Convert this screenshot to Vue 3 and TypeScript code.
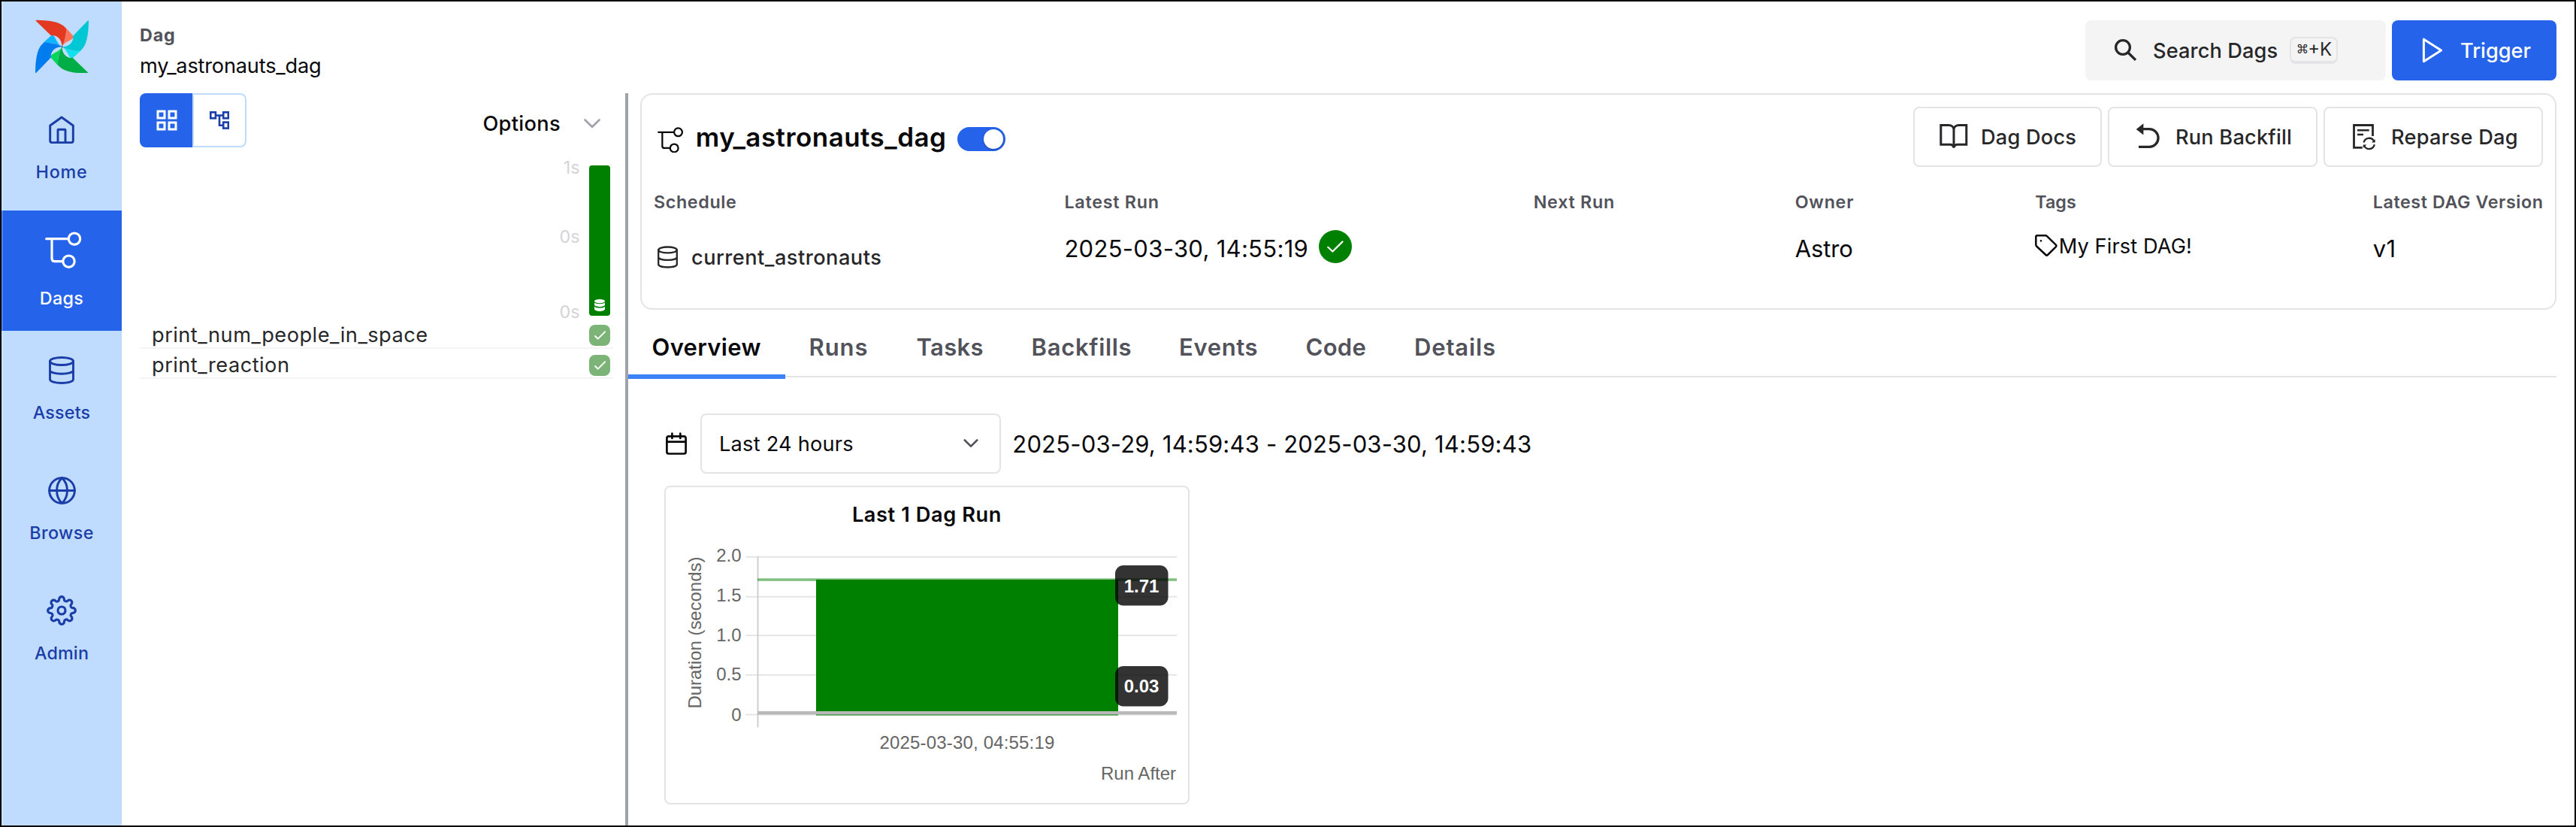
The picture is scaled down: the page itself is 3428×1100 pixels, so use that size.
<script setup lang="ts">
interface Tab { label: string; width: number; spacing: number }

const tabs: Tab[] = [
  { label: 'Overview', width: 209, spacing: 0.32 },
  { label: 'Runs', width: 143, spacing: 0.95 },
  { label: 'Tasks', width: 153, spacing: 0.33 },
  { label: 'Backfills', width: 196.5, spacing: 0.7 },
  { label: 'Events', width: 168.5, spacing: 0.65 },
  { label: 'Code', width: 144.5, spacing: 0.31 },
  { label: 'Details', width: 170, spacing: 0.85 },
]

const tasks = ['print_num_people_in_space', 'print_reaction']

const ticks = [
  { label: '2.0', line: 740.7, base: 747 },
  { label: '1.5', line: 793.7, base: 800 },
  { label: '1.0', line: 845.2, base: 852.7 },
  { label: '0.5', line: 897.8, base: 905.3 },
  { label: '0', line: 950.5, base: 958.7 },
]
</script>

<template>
  <div class="app">
    <nav class="nav">
      <div class="brand">
        <svg class="logo" viewBox="141 76 212 214">
          <g v-for="(c, i) in [['#e43921', '#ff7557'], ['#00c7d4', '#11e1ee'], ['#00ad46', '#04d659'], ['#017cee', '#0cb6ff']]" :key="i" :transform="`rotate(${i * 90} 247.5 184.5)`">
            <path :fill="c[1]" d="M262 108 L291 140 Q296 146 289 153 C275 162 256 168 247.5 184.5 C256 168 268 140 262 108Z" />
            <path :fill="c[0]" d="M143 81 Q141 78 147 78 C193 79 232 84 253 101 Q259 106 264 112 C265 136 258 165 247.5 184.5 C247 160 235 143 213 140 Q208 141 205 141Z" />
          </g>
          <circle cx="248" cy="185" r="3" fill="#51504f" />
        </svg>
      </div>
      <div class="nav-item">
        <span class="nav-icon">
          <svg width="34" height="37.3" viewBox="195 460 102 112" class="line" stroke-width="8.8">
            <path d="M246 466 L292 499 V559 Q292 567 284 567 H208 Q200 567 200 559 V499Z" />
            <path d="M231 567 V517 Q231 515 233 515 H259 Q261 515 261 517 V567" />
          </svg>
        </span>
        <span class="nav-label home">Home</span>
      </div>
      <div class="nav-item active">
        <span class="nav-icon">
          <svg width="48.7" height="49.3" viewBox="183 924 146 148" class="line" stroke-width="9.5">
            <path d="M188 953 H276 M210 953 V1031 Q210 1043 222 1043 H253" />
            <circle cx="300" cy="953" r="23" /><circle cx="277.500" cy="1043" r="23" />
          </svg>
        </span>
        <span class="nav-label dags">Dags</span>
      </div>
      <div class="nav-item">
        <span class="nav-icon">
          <svg width="34" height="37" viewBox="0 0 34 37" class="line" stroke-width="2.9">
            <ellipse cx="17" cy="6.5" rx="15.500" ry="5" />
            <path d="M1.500 6.500 V30.500 C1.500 33.500 8.400 35.500 17 35.500 S32.500 33.500 32.500 30.500 V6.500 M1.500 18.500 C1.500 21.300 8.400 23.300 17 23.300 S32.500 21.300 32.500 18.500" />
          </svg>
        </span>
        <span class="nav-label assets">Assets</span>
      </div>
      <div class="nav-item">
        <span class="nav-icon">
          <svg width="37" height="37" viewBox="0 0 37 37" class="line" stroke-width="2.9">
            <circle cx="18.500" cy="18.500" r="16.900" />
            <path d="M1.600 18.500 H35.400 M18.500 1.600 C27.800 10.500 27.800 26.500 18.500 35.400 C9.200 26.500 9.200 10.500 18.500 1.600Z" />
          </svg>
        </span>
        <span class="nav-label browse">Browse</span>
      </div>
      <div class="nav-item">
        <span class="nav-icon">
          <svg width="40" height="40" viewBox="0 0 24 24" class="line" stroke-width="1.9">
            <circle cx="12" cy="12" r="3" />
            <path d="M19.4 15a1.65 1.65 0 0 0 .33 1.82l.06.06a2 2 0 0 1 0 2.83 2 2 0 0 1-2.83 0l-.06-.06a1.65 1.65 0 0 0-1.82-.33 1.65 1.65 0 0 0-1 1.51V21a2 2 0 0 1-2 2 2 2 0 0 1-2-2v-.09A1.65 1.65 0 0 0 9 19.4a1.65 1.65 0 0 0-1.82.33l-.06.06a2 2 0 0 1-2.83 0 2 2 0 0 1 0-2.83l.06-.06a1.65 1.65 0 0 0 .33-1.82 1.65 1.65 0 0 0-1.51-1H3a2 2 0 0 1-2-2 2 2 0 0 1 2-2h.09A1.65 1.65 0 0 0 4.6 9a1.65 1.65 0 0 0-.33-1.82l-.06-.06a2 2 0 0 1 0-2.83 2 2 0 0 1 2.83 0l.06.06a1.65 1.65 0 0 0 1.82.33H9a1.65 1.65 0 0 0 1-1.51V3a2 2 0 0 1 2-2 2 2 0 0 1 2 2v.09a1.65 1.65 0 0 0 1 1.51 1.65 1.65 0 0 0 1.82-.33l.06-.06a2 2 0 0 1 2.83 0 2 2 0 0 1 0 2.83l-.06.06a1.65 1.65 0 0 0-.33 1.82V9a1.65 1.65 0 0 0 1.51 1H21a2 2 0 0 1 2 2 2 2 0 0 1-2 2h-.09a1.65 1.65 0 0 0-1.51 1z" />
          </svg>
        </span>
        <span class="nav-label admin">Admin</span>
      </div>
    </nav>

    <div class="main">
      <header class="header">
        <div class="crumbs">
          <div class="crumb-label">Dag</div>
          <div class="crumb-value">my_astronauts_dag</div>
        </div>
        <div class="header-actions">
          <button class="search">
            <svg class="btn-icon line" viewBox="0 0 40 40" stroke-width="3.300">
              <circle cx="16" cy="16" r="9.400" /><path class="handle" d="M22.500 22.500 L33 32.900" />
            </svg>
            <span>Search Dags</span>
            <kbd class="kbd"><span class="cmd">⌘</span>+K</kbd>
          </button>
          <button class="trigger">
            <svg class="btn-icon line" viewBox="0 0 40 40" stroke-width="3"><path d="M8.400 5.200 V34.800 L31.600 20Z" /></svg>
            <span>Trigger</span>
          </button>
        </div>
      </header>

      <div class="body">
        <aside class="grid-pane">
          <div class="toolbar">
            <div class="view-toggle">
              <button class="view on">
                <svg width="28" height="28" viewBox="0 0 28 28" fill="none" stroke="#fff" stroke-width="3">
                  <rect x="2" y="2" width="9" height="9" /><rect x="17" y="2" width="9" height="9" />
                  <rect x="2" y="17" width="9" height="9" /><rect x="17" y="17" width="9" height="9" />
                </svg>
              </button>
              <button class="view off">
                <svg width="26" height="24" viewBox="0 0 26 24" fill="none" stroke="#1a3da8" stroke-width="2.600">
                  <rect x="1.300" y="1.300" width="6.600" height="8" /><rect x="18.200" y="1.300" width="6.600" height="8" />
                  <rect x="18.200" y="14.600" width="6.600" height="8" /><path d="M8 5.500 H18 M13 5.500 V18.800 H18" />
                </svg>
              </button>
            </div>
            <div class="options">
              <span>Options</span>
              <svg width="22" height="13" viewBox="0 0 22 13" fill="none" stroke="#a1a1aa" stroke-width="2.700" stroke-linecap="round" stroke-linejoin="round"><path d="M1.500 1.500 L11 10.700 L20.500 1.500" /></svg>
            </div>
          </div>
          <div class="gantt">
            <div class="axis"><span class="one">1s</span><span>0s</span><span>0s</span></div>
            <div class="run-bar">
              <svg width="14" height="16" viewBox="0 0 14 16" fill="#fff">
                <ellipse cx="7" cy="2.600" rx="7" ry="2.600" />
                <path d="M0 4.400 C1.500 6.700 12.500 6.700 14 4.400 V7.300 C13.500 11 .5 11 0 7.300Z" />
                <path d="M0 9.700 C1.500 12.200 12.500 12.200 14 9.700 V13 C13.500 17 .5 17 0 13Z" />
              </svg>
            </div>
          </div>
          <div v-for="t in tasks" :key="t" class="task">
            <span>{{ t }}</span>
            <i class="state">
              <svg width="15" height="12" viewBox="0 0 15 12" fill="none" stroke="#fff" stroke-width="1.900" stroke-linecap="round" stroke-linejoin="round"><path d="M1 7 L4.800 10.700 L14 1.300" /></svg>
            </i>
          </div>
        </aside>
        <div class="divider"></div>

        <section class="detail">
          <div class="card">
            <div class="card-top">
              <svg class="dag-icon line" viewBox="183 924 146 148" stroke-width="9.600">
                <path d="M188 953 H276 M210 953 V1031 Q210 1043 222 1043 H253" />
                <circle cx="300" cy="953" r="23" /><circle cx="277.500" cy="1043" r="23" />
              </svg>
              <h1 class="title">my_astronauts_dag</h1>
              <div class="switch"><i></i></div>
              <div class="buttons">
                <button class="btn docs">
                  <svg class="btn-icon" viewBox="0 0 40 40" fill="none" stroke="currentColor" stroke-width="3">
                    <path d="M2.800 4.500 H13 C17 4.500 20 7 20 10.500 C20 7 23 4.500 27 4.500 H36.800 V30.200 H25 C22.500 30.200 20.500 32 20 34.500 C19.500 32 17.500 30.200 15 30.200 H2.800Z M20 9.500 V33" />
                  </svg>
                  <span>Dag Docs</span>
                </button>
                <button class="btn backfill">
                  <svg class="btn-icon" viewBox="0 0 40 40" fill="none" stroke="currentColor" stroke-width="3.300">
                    <path fill="currentColor" stroke="none" d="M3.700 9.900 L13.400 2.200 V17.500Z" />
                    <path d="M12 9.600 H21.200 A11.800 11.800 0 0 1 21.200 33.300 H7" />
                  </svg>
                  <span>Run Backfill</span>
                </button>
                <button class="btn reparse">
                  <svg class="btn-icon" viewBox="0 0 40 40" fill="none" stroke="currentColor" stroke-width="2.800">
                    <path d="M31.500 19 V4.500 H6.500 V34.300 H17.700" />
                    <path stroke-width="2.400" d="M11 11.300 H26.700 M11 17 H19" />
                    <path stroke-width="2.300" d="M19.600 27.500 A7.200 7.200 0 0 1 33 25.600 M33.800 30.300 A7.200 7.200 0 0 1 20.400 32.300" />
                    <path fill="currentColor" stroke="none" d="M34.700 23.200 V27.500 H30Z M18.700 34.700 V30.400 H23.400Z" />
                  </svg>
                  <span>Reparse Dag</span>
                </button>
              </div>
            </div>
            <div class="facts">
              <div>
                <div class="fact-label schedule">Schedule</div>
                <div class="asset">
                  <svg width="27" height="30" viewBox="0 0 34 37" class="line" stroke-width="2.900">
                    <ellipse cx="17" cy="6.500" rx="15.500" ry="5" />
                    <path d="M1.500 6.500 V30.500 C1.500 33.500 8.400 35.500 17 35.500 S32.500 33.500 32.500 30.500 V6.500 M1.500 18.500 C1.500 21.300 8.400 23.300 17 23.300 S32.500 21.300 32.500 18.500" />
                  </svg>
                  <span>current_astronauts</span>
                </div>
              </div>
              <div>
                <div class="fact-label">Latest Run</div>
                <div class="latest">
                  <span>2025-03-30, 14:55:19</span>
                  <i class="ok">
                    <svg width="22" height="16" viewBox="0 0 22 16" fill="none" stroke="#fff" stroke-width="2.200" stroke-linecap="round" stroke-linejoin="round"><path d="M1.300 8.800 L7.300 14.500 L20.500 1.500" /></svg>
                  </i>
                </div>
              </div>
              <div><div class="fact-label">Next Run</div></div>
              <div><div class="fact-label">Owner</div><div class="value owner">Astro</div></div>
              <div>
                <div class="fact-label tags">Tags</div>
                <div class="tag">
                  <svg width="30" height="30" viewBox="0 0 30 30" class="line" stroke-width="2.500">
                    <path d="M1.300 3 Q1.300 1.300 3 1.300 H14 Q15.200 1.300 16 2.100 L27.800 13.700 Q29 15 27.800 16.300 L17 27 Q15.700 28.300 14.400 27 L2.100 15.500 Q1.300 14.700 1.300 13.500Z" /><circle cx="8" cy="8.300" r=".6" stroke-width="1.500" />
                  </svg>
                  <span>My First DAG!</span>
                </div>
              </div>
              <div><div class="fact-label version">Latest DAG Version</div><div class="value v">v1</div></div>
            </div>
          </div>

          <div class="tabs">
            <a v-for="(t, i) in tabs" :key="t.label" class="tab" :class="{ current: i === 0 }" :style="{ width: t.width + 'px', letterSpacing: t.spacing + 'px' }">{{ t.label }}</a>
          </div>

          <div class="filter">
            <svg width="28" height="30" viewBox="0 0 28 30" class="line" stroke-width="2.700">
              <rect x="1.400" y="5.300" width="25.200" height="23.200" rx="2.500" /><path d="M1.400 12.700 H26.600 M8.400 1.700 V8 M19.300 1.700 V8" />
            </svg>
            <div class="select">
              <span>Last 24 hours</span>
              <svg width="20" height="12" viewBox="0 0 20 12" fill="none" stroke="#52525b" stroke-width="2.600" stroke-linecap="round" stroke-linejoin="round"><path d="M1.800 1.500 L10 9.700 L18.200 1.500" /></svg>
            </div>
            <span class="range">2025-03-29, 14:59:43 - 2025-03-30, 14:59:43</span>
          </div>

          <div class="chart-card">
            <h2>Last 1 Dag Run</h2>
            <svg class="chart" width="695" height="364" viewBox="886 704 695 364">
              <g stroke="#e5e5e5" stroke-width="2">
                <line v-for="t in ticks" :key="t.label" x1="992.500" x2="1566" :y1="t.line" :y2="t.line" />
              </g>
              <path d="M1008.500 740 V967.500" stroke="#cfcfcf" stroke-width="2" />
              <rect x="1086" y="771" width="402" height="180.500" fill="#008000" />
              <rect x="1008" y="769.300" width="558" height="3.500" fill="#008000" fill-opacity=".5" />
              <rect x="1008" y="946" width="558" height="4.500" fill="#b9b9b9" />
              <g class="tick" text-anchor="end">
                <text v-for="t in ticks" :key="t.label" x="986.500" :y="t.base">{{ t.label }}</text>
              </g>
              <text class="tick" transform="translate(932.800 942.500) rotate(-90)" letter-spacing="-.05">Duration (seconds)</text>
              <text class="tick" x="1170.500" y="995.700" letter-spacing=".17">2025-03-30, 04:55:19</text>
              <text class="tick" x="1465" y="1036.800">Run After</text>
              <g fill="#000" fill-opacity=".8">
                <rect x="1484" y="752" width="70.500" height="53.500" rx="11" /><rect x="1484" y="886" width="70.500" height="53.500" rx="11" />
              </g>
              <g class="tip" text-anchor="middle"><text x="1519" y="787.500">1.71</text><text x="1519" y="921">0.03</text></g>
            </svg>
          </div>
        </section>
      </div>
    </div>
  </div>
</template>

<style>
body { margin: 0; background: #fff; }
</style>

<style scoped>
.app, .app * { box-sizing: border-box; }
.app { display: flex; width: 3428px; height: 1100px; overflow: hidden; border: 2px solid #000; background: #fff; color: #09090b; font-family: Inter, "Liberation Sans", sans-serif; font-size: 27.2px; }
button { margin: 0; padding: 0; font: inherit; color: inherit; background: none; border: 0; display: flex; align-items: center; }
svg { display: block; flex: none; }
.line { fill: none; stroke: currentColor; stroke-linecap: round; stroke-linejoin: round; }
.handle { stroke-linecap: butt; }

.nav { position: relative; width: 160px; flex: none; background: #bfdbfe; color: #1a3da8; }
.nav::before { content: ""; position: absolute; left: 0; top: 0; bottom: 0; width: 2px; background: rgba(255, 255, 255, .2); }
.brand { height: 118px; padding: 23.500px 0 0 45px; }
.logo { width: 70.700px; height: 71.300px; }
.nav-item { height: 160px; display: flex; flex-direction: column; align-items: center; }
.nav-icon { height: 95px; padding-top: 9.500px; display: flex; align-items: center; }
.nav-label { font-size: 23.300px; line-height: 28px; font-weight: 500; }
.active { background: #2563eb; color: #fff; }
.active .nav-icon { height: 103px; padding: 3px 0 0 5px; }
.home { letter-spacing: .8px; }
.dags { letter-spacing: .34px; }
.assets { letter-spacing: .21px; }
.browse { letter-spacing: .42px; }
.admin { letter-spacing: .18px; }

.main { flex: 1; min-width: 0; display: flex; flex-direction: column; }
.header { height: 122px; flex: none; padding: 25px 24px 0; display: flex; justify-content: space-between; align-items: flex-start; }
.crumbs { padding-top: 5px; }
.crumb-label { font-size: 23.300px; line-height: 30px; font-weight: 700; letter-spacing: .83px; color: #52525b; }
.crumb-value { margin-top: 6px; line-height: 40px; letter-spacing: -.2px; }
.header-actions { display: flex; gap: 8px; font-weight: 500; }
.btn-icon { width: 40px; height: 40px; }
.search { width: 400px; height: 80px; padding-left: 34px; gap: 16px; border-radius: 8px; background: #f4f4f5; color: #27272a; letter-spacing: .1px; }
.kbd { width: 64px; height: 36px; margin-top: -1px; padding-left: 6.500px; border: 2px solid #e4e4e7; border-bottom-width: 4px; border-radius: 8px; display: flex; align-items: center; font: 400 24px/30px Inter, sans-serif; letter-spacing: 0; white-space: nowrap; }
.cmd { font-family: "DejaVu Sans", sans-serif; font-size: 16.500px; margin-right: -1px; }
.trigger { width: 219px; height: 80px; padding-left: 34px; gap: 17px; border-radius: 8px; background: #2563eb; color: #fff; }
.search > span, .trigger > span { padding-top: 1px; }

.body { flex: 1; min-height: 0; display: flex; }
.grid-pane { width: 670px; flex: none; padding: 0 16px 0 24px; color: #27272a; }
.toolbar { display: flex; justify-content: space-between; height: 72px; }
.view-toggle { display: flex; width: 142px; }
.view { justify-content: center; height: 72px; }
.on { width: 70px; padding-left: 2px; background: #2563eb; border-radius: 8px 0 0 8px; }
.off { width: 72px; border: 2px solid #bfdbfe; border-radius: 0 8px 8px 0; }
.options { display: flex; padding-right: 17px; color: #09090b; font-weight: 500; line-height: 81px; letter-spacing: .34px; }
.options svg { margin: 34px 0 0 31px; }
.gantt { display: flex; justify-content: flex-end; height: 228px; padding-right: 4px; }
.axis { display: flex; flex-direction: column; align-items: flex-end; margin-right: 12.500px; font-size: 23.300px; line-height: 28px; color: #d4d4d8; }
.axis span + span { margin-top: 72px; }
.axis span.one { margin-top: 13px; }
.axis span.one + span { margin-top: 64px; }
.run-bar { width: 28px; height: 200px; margin-top: 24px; padding-bottom: 6px; border-radius: 4px; background: #008000; display: flex; align-items: flex-end; justify-content: center; }
.task { display: flex; justify-content: space-between; height: 40px; padding: 0 4px 0 16px; border-bottom: 2px solid #f4f4f5; line-height: 43px; letter-spacing: .48px; }
.state { width: 28px; height: 28px; margin-top: 8px; border-radius: 8px; background: #7cb477; display: flex; align-items: center; justify-content: center; }
.divider { width: 4px; background: #a1a1aa; flex: none; }

.detail { flex: 1; min-width: 0; padding-right: 24px; }
.card { height: 288px; margin-left: 16px; padding: 16px; border: 2px solid #e4e4e7; border-radius: 16px; }
.card-top { display: flex; align-items: center; height: 80px; }
.dag-icon { width: 34.300px; height: 34.800px; margin: 8px 0 0 5px; }
.title { margin: 0 0 0 16.500px; font-size: 35px; line-height: 44px; font-weight: 600; letter-spacing: .46px; }
.switch { width: 64px; height: 32px; margin: 6px 0 0 14.300px; padding: 3px; border-radius: 16px; background: #2563eb; display: flex; justify-content: flex-end; }
.switch i { width: 26px; height: 26px; border-radius: 50%; background: #fff; box-shadow: 0 1px 3px rgba(0, 0, 0, .3); }
.buttons { margin-left: auto; display: flex; gap: 8px; color: #27272a; font-weight: 500; }
.btn { height: 80px; gap: 16px; padding-left: 32px; border: 2px solid #e4e4e7; border-radius: 8px; white-space: nowrap; }
.btn span { padding-top: 1px; }
.docs { width: 251px; letter-spacing: .2px; }
.backfill { width: 279px; letter-spacing: .2px; }
.reparse { width: 292px; letter-spacing: .26px; }
.facts { display: grid; grid-template-columns: 546.400px 624.300px 348px 319.500px 449.500px 1fr; margin-top: 32px; white-space: nowrap; }
.fact-label { height: 28px; padding-top: 1px; font-size: 23.300px; line-height: 28px; font-weight: 600; letter-spacing: .74px; color: #52525b; }
.schedule { letter-spacing: .62px; }
.tags { letter-spacing: .03px; }
.version { letter-spacing: .58px; }
.asset { display: flex; align-items: center; height: 40px; margin-top: 40px; padding-left: 5px; gap: 18px; line-height: 40px; color: #27272a; font-weight: 500; letter-spacing: .48px; }
.asset span { padding-top: 1px; }
.latest { display: flex; height: 44px; margin-top: 24px; gap: 14px; font-size: 31px; line-height: 50px; letter-spacing: .3px; }
.ok { width: 44px; height: 44px; border-radius: 50%; background: #008000; display: flex; align-items: center; justify-content: center; }
.value { margin-top: 29px; font-size: 31px; line-height: 40px; }
.owner { letter-spacing: -.14px; }
.v { letter-spacing: .3px; }
.tag { display: flex; align-items: center; height: 40px; margin-top: 25px; line-height: 40px; letter-spacing: .1px; gap: 1.500px; }
.tag span { padding-top: 1px; }

.tabs { display: flex; height: 78px; margin-top: 12px; border-bottom: 2px solid #e4e4e7; font-size: 31px; line-height: 76px; font-weight: 600; color: #52525b; }
.tab { position: relative; padding-left: 31.500px; white-space: nowrap; }
.current { color: #09090b; }
.current::after { content: ""; position: absolute; left: 0; right: 0; bottom: -4px; height: 6px; background: #3b82f6; }
.filter { display: flex; align-items: center; height: 80px; margin: 48px 0 0 50px; }
.select { width: 400px; height: 80px; margin-left: 18px; padding: 0 28px 0 23px; border: 2px solid #e4e4e7; border-radius: 8px; display: flex; align-items: center; justify-content: space-between; letter-spacing: .22px; }
.range { margin-left: 15.300px; padding-top: 1px; font-size: 31px; letter-spacing: .18px; white-space: nowrap; }
.chart-card { width: 699px; height: 424px; margin: 16px 0 0 48px; border: 2px solid #e4e4e7; border-radius: 8px; padding-top: 16px; }
.chart-card h2 { height: 40px; margin: 0; text-align: center; font-size: 27.200px; line-height: 41px; font-weight: 600; letter-spacing: .6px; }
.chart text { font-family: "Liberation Sans", Arial, sans-serif; font-size: 24px; }
.tick { fill: #666; }
.tip { fill: #fff; }
.chart .tip text { font-weight: 700; }
</style>
